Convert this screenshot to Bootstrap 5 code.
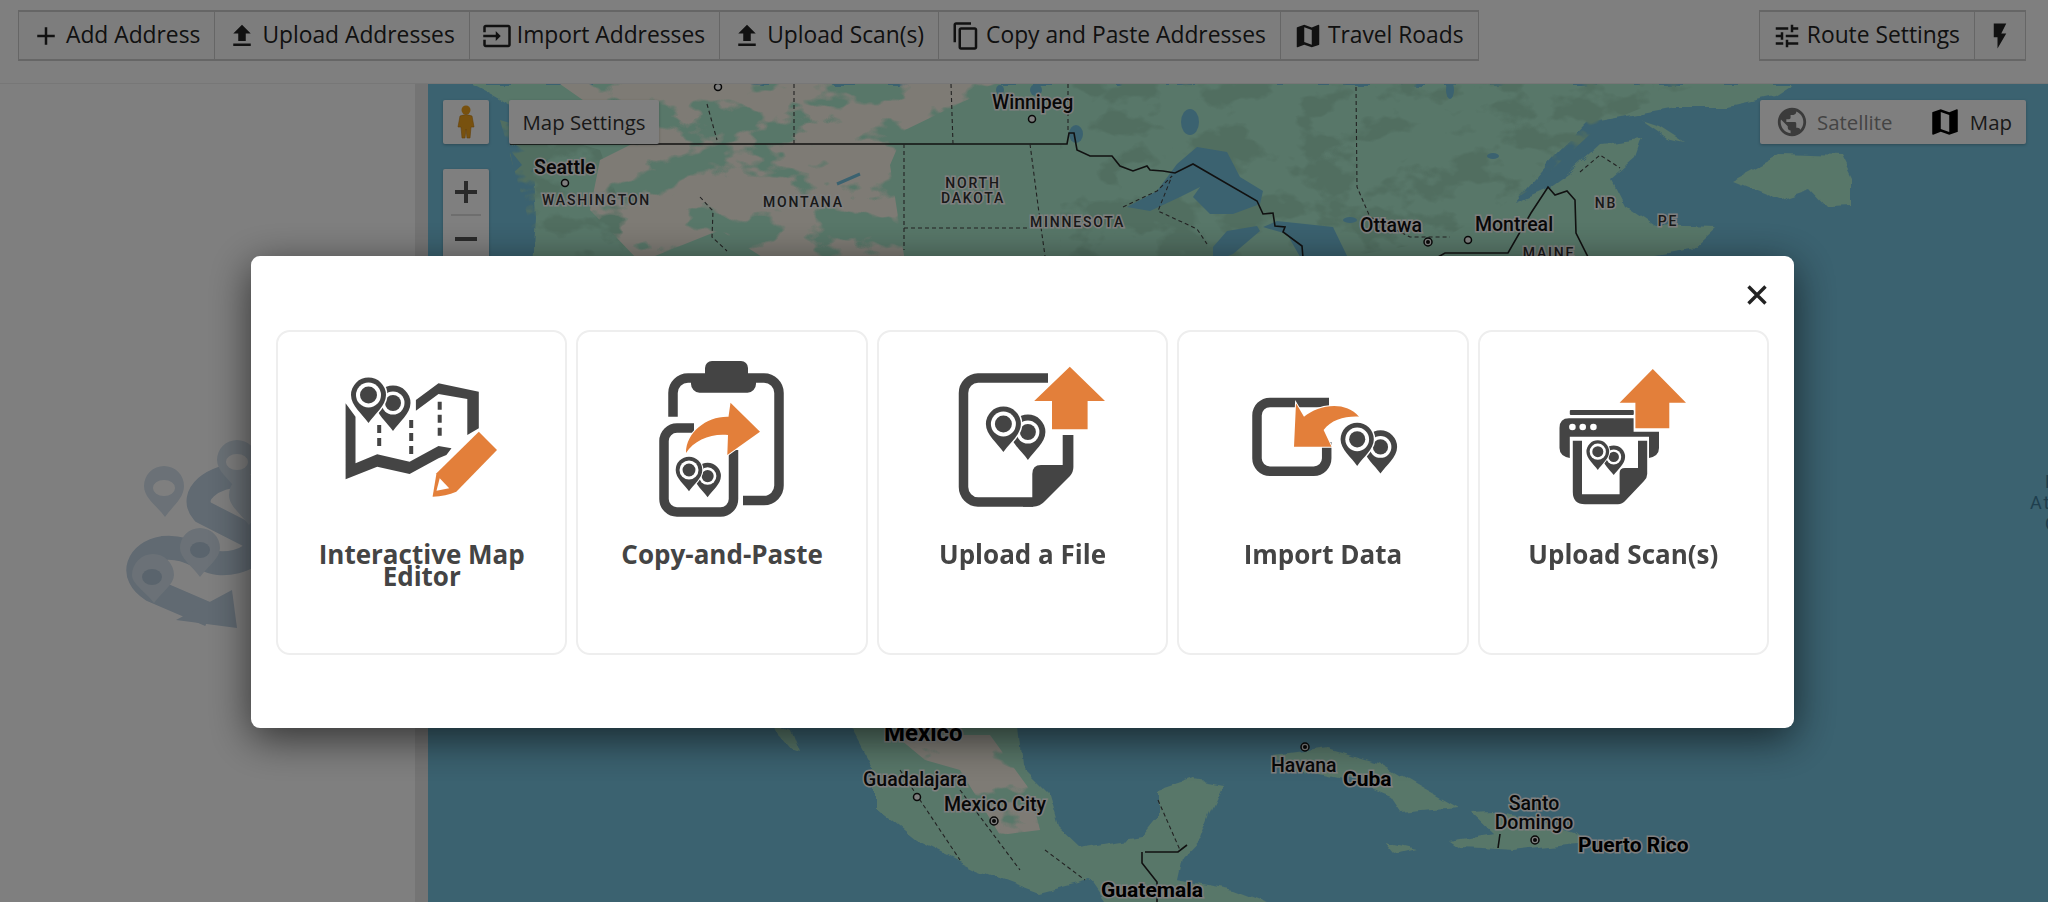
<!DOCTYPE html>
<html lang="en">
<head>
  <meta charset="UTF-8" />
  <meta name="viewport" content="width=device-width, initial-scale=1" />
  <title>Add Stops</title>
  <link href="https://cdn.jsdelivr.net/npm/bootstrap@5.3.0/dist/css/bootstrap.min.css" rel="stylesheet" />
  <style>
    html, body { height: 100%; overflow: hidden; }
    body { font-family: "Open Sans", sans-serif; background: #fff; }
    .top-bar { height: 84px; padding: 10px 22px 0 18px; border-bottom: 1px solid #eee; }
    .tool-group { height: 51px; border: 1px solid #ccc; border-bottom-width: 2px; border-top-width: 2px; background: #fbfbfb; }
    .tool-btn { display: flex; align-items: center; gap: 5px; height: 100%; padding: 0 14px 0 12px; border: 0; border-right: 1px solid #ccc; background: transparent; font-size: 22.8px; color: #222; white-space: nowrap; }
    .tool-btn:last-child { border-right: 0; }
    .tool-btn svg { width: 30px; height: 30px; fill: #222; flex: none; }
    .bolt-btn { padding: 0 10px; }
    .work-area { height: 818px; }
    .side-panel { width: 415px; padding-top: 74px; }
    .split-bar { width: 13px; background: #e9e9e9; }
    .map-pane { position: relative; flex: 1; overflow: hidden; background: #76c4e0; }
    .map-pane > svg { display: block; }
    .map-tile { position: absolute; top: 16px; height: 44px; background: #fff; border-radius: 2px; display: flex; align-items: center; color: #333; font-size: 20.4px; box-shadow: 0 1px 3px rgba(0,0,0,.25); }
    .peg-tile { left: 15px; width: 46px; justify-content: center; }
    .settings-tile { left: 81px; width: 150px; justify-content: center; }
    .zoom-tile { left: 15px; top: 85px; width: 46px; height: 110px; flex-direction: column; }
    .zoom-tile div { height: 45px; width: 100%; display: flex; align-items: center; justify-content: center; }
    .zoom-tile hr { width: 30px; margin: 0; opacity: 1; border-top: 2px solid #ddd; }
    .type-tile { right: 22px; width: 266px; padding: 0 14px 0 15px; justify-content: space-between; }
    .type-tile span { display: flex; align-items: center; gap: 8px; }
    .type-off { color: #888; }
    .map-city { font-family: Roboto, sans-serif; font-size: 19.5px; font-weight: 500; fill: #111; stroke: #fff; stroke-width: 3px; paint-order: stroke; }
    .map-big { font-family: Roboto, sans-serif; font-size: 21px; font-weight: 700; fill: #000; stroke: #fff; stroke-width: 3px; paint-order: stroke; }
    .map-state { font-family: Roboto, sans-serif; font-size: 14px; font-weight: 500; letter-spacing: 1.8px; fill: #333; stroke: #fff; stroke-width: 3px; paint-order: stroke; }
    .map-sea { font-family: Roboto, sans-serif; font-size: 18px; letter-spacing: 2px; fill: #3e7f9c; }
    .modal-dialog.picker-dialog { max-width: 1543px; margin: 256px 0 0 251px; }
    .picker-content { height: 472px; border: 0; border-radius: 9px; box-shadow: 0 10px 42px rgba(0,0,0,.62); }
    .close-x { position: absolute; top: 29px; right: 27px; width: 20px; height: 20px; padding: 0; border: 0; background: none; line-height: 0; }
    .picker-body { padding: 74px 25px 0; gap: 9px; }
    .picker-card { flex: 1 1 0; height: 325px; padding-top: 18px; border: 2px solid #eee; border-radius: 14px; align-items: center; text-align: center; }
    .picker-card svg { width: 200px; height: 170px; display: block; }
    .picker-title { width: 230px; margin-top: 23px; font-size: 26px; line-height: 22px; font-weight: 700; color: #444; }
    .dk { fill: #444; }
    .og { fill: #e37f3a; }
  </style>
</head>
<body>
  <div class="top-bar d-flex justify-content-between align-items-start">
    <div class="tool-group d-flex">
      <button class="tool-btn"><svg viewBox="0 0 24 24"><path d="M19 13h-6v6h-2v-6H5v-2h6V5h2v6h6v2z"/></svg>Add Address</button>
      <button class="tool-btn"><svg viewBox="0 0 24 24"><path d="M9 16h6v-6h4l-7-7-7 7h4zm-4 2h14v2H5z"/></svg>Upload Addresses</button>
      <button class="tool-btn"><svg viewBox="0 0 24 24"><path d="M21 3.01H3c-1.1 0-2 .9-2 2V9h2V4.99h18v14.03H3V15H1v4.01c0 1.1.9 1.98 2 1.98h18c1.1 0 2-.88 2-1.98v-14c0-1.11-.9-2-2-2zM11 16l4-4-4-4v3H1v2h10v3z"/></svg>Import Addresses</button>
      <button class="tool-btn"><svg viewBox="0 0 24 24"><path d="M9 16h6v-6h4l-7-7-7 7h4zm-4 2h14v2H5z"/></svg>Upload Scan(s)</button>
      <button class="tool-btn"><svg viewBox="0 0 24 24"><path d="M16 1H4c-1.1 0-2 .9-2 2v14h2V3h12V1zm3 4H8c-1.1 0-2 .9-2 2v14c0 1.1.9 2 2 2h11c1.1 0 2-.9 2-2V7c0-1.1-.9-2-2-2zm0 16H8V7h11v14z"/></svg>Copy and Paste Addresses</button>
      <button class="tool-btn"><svg viewBox="0 0 24 24"><path d="M20.5 3l-.16.03L15 5.1 9 3 3.36 4.9c-.21.07-.36.25-.36.48V20.5c0 .28.22.5.5.5l.16-.03L9 18.9l6 2.1 5.64-1.9c.21-.07.36-.25.36-.48V3.5c0-.28-.22-.5-.5-.5zM15 19l-6-2.11V5l6 2.11V19z"/></svg>Travel Roads</button>
    </div>
    <div class="tool-group d-flex">
      <button class="tool-btn"><svg viewBox="0 0 24 24"><path d="M3 17v2h6v-2H3zM3 5v2h10V5H3zm10 16v-2h8v-2h-8v-2h-2v6h2zM7 9v2H3v2h4v2h2V9H7zm14 4v-2H11v2h10zm-6-4h2V7h4V5h-4V3h-2v6z"/></svg>Route Settings</button>
      <button class="tool-btn bolt-btn"><svg viewBox="0 0 24 24"><path d="M7 2v11h3v9l7-12h-4l4-8z"/></svg></button>
    </div>
  </div>

  <div class="work-area d-flex">
    <div class="side-panel d-flex justify-content-center align-items-center">
      <!-- empty route placeholder -->
      <svg width="180" height="220" viewBox="0 0 180 220">
        <path d="M125 55C95 55 70 75 85 92L130 115C150 130 125 145 100 143C85 142 70 125 45 128C20 132 10 155 34 170L92 195" fill="none" stroke="#c2d4e4" stroke-width="24"/>
        <path d="M114 170L119 208L58 200Z" fill="#c2d4e4"/>
        <g fill="#d6e3ee">
          <path d="M47 97C39 86 26 78 26 66A20 20 0 0 1 66 66C66 78 55 86 47 97Z"/>
          <path d="M119 70C111 59 99 51 99 40A20 20 0 0 1 139 40C139 51 127 59 119 70Z"/>
          <path d="M131 105C123 94 111 86 111 75A20 20 0 0 1 151 75C151 86 139 94 131 105Z"/>
          <path d="M82 157C74 146 62 138 62 128A20 20 0 0 1 102 128C102 138 90 146 82 157Z"/>
          <path d="M36 183C28 172 14 164 14 155A21 21 0 0 1 56 155C56 164 44 172 36 183Z"/>
        </g>
        <ellipse cx="46" cy="68" rx="11" ry="8" fill="#fff"/>
        <ellipse cx="119" cy="42" rx="11" ry="8" fill="#fff"/>
        <ellipse cx="82" cy="130" rx="10" ry="8" fill="#b4c8da"/>
        <ellipse cx="34" cy="157" rx="10" ry="8" fill="#b4c8da"/>
      </svg>
    </div>
    <div class="split-bar"></div>
    <div class="map-pane">
      <svg width="1620" height="818" viewBox="428 84 1620 818">
        <defs>
          <filter id="rough" x="0" y="0" width="100%" height="100%">
            <feTurbulence type="fractalNoise" baseFrequency=".035" numOctaves="3" seed="4"/>
            <feDisplacementMap in="SourceGraphic" scale="12" xChannelSelector="R" yChannelSelector="G"/>
          </filter>
          <filter id="patch" filterUnits="userSpaceOnUse" x="428" y="84" width="1620" height="818" color-interpolation-filters="sRGB">
            <feTurbulence type="fractalNoise" baseFrequency=".016 .028" numOctaves="4" seed="7"/>
            <feColorMatrix type="matrix" values="0 0 0 0 0 0 0 0 0 0 0 0 0 0 0 14 0 0 0 -5.8" result="m"/>
            <feComposite in="SourceGraphic" in2="m" operator="in"/>
          </filter>
          <filter id="patch2" filterUnits="userSpaceOnUse" x="428" y="84" width="1620" height="818" color-interpolation-filters="sRGB">
            <feTurbulence type="fractalNoise" baseFrequency=".02 .03" numOctaves="4" seed="21"/>
            <feColorMatrix type="matrix" values="0 0 0 0 0 0 0 0 0 0 0 0 0 0 0 10 0 0 0 -5" result="m"/>
            <feComposite in="SourceGraphic" in2="m" operator="in"/>
          </filter>
        </defs>
        <!-- land -->
        <g filter="url(#rough)" fill="#b0eed2">
          <path d="M469 84L490 95L517 110L510 143L548 160L532 173L535 217L532 265H1601L1690 250L1715 227L1655 225L1625 205L1612 180L1635 160L1642 140L1600 145L1570 172L1545 190L1515 203L1555 157L1588 123L1675 107L1728 107L1775 97L1795 84Z"/>
          <path d="M1642 120L1660 126L1685 142L1668 138Z"/>
          <path d="M1732 180L1779 155L1842 157L1852 177L1852 207L1829 208L1812 190L1782 200Z"/>
          <path d="M776 720L792 728L801 752L795 750L782 735Z"/>
          <path d="M848 720L874 767L874 807L915 840L977 870L1039 893L1090 880L1111 910H1287L1235 890L1178 880L1183 857L1199 840L1209 813L1223 783L1194 778L1158 790L1158 817L1142 837L1080 847L1059 827L1049 793L1023 767L1018 720Z"/>
          <path d="M1276 755L1328 748L1379 763L1421 787L1457 807L1400 812L1390 797L1348 780L1287 767Z"/>
          <path d="M1472 813L1493 812L1524 817L1575 833L1586 842L1514 850L1462 847L1452 840L1493 833Z"/>
          <path d="M1385 840L1416 847L1395 852Z"/>
        </g>
        <!-- darker forest, then dry land -->
        <path filter="url(#patch2)" fill="#a2dcc0" d="M1060 84H1700L1600 125L1530 190L1440 240L1320 262H1060ZM500 120L600 150L640 260H540Z"/>
        <path filter="url(#patch)" fill="#fdf7ea" d="M560 84H1000L905 130L890 165L905 262H770L720 230L640 262L590 210L600 160L640 140Z"/>
        <path filter="url(#patch)" fill="#fdf7ea" d="M895 735H990L1030 790L1040 830L1000 835L960 770L925 760Z"/>
        <!-- lakes -->
        <g fill="#76c4e0">
          <path d="M1127 207L1157 191L1177 164L1197 147L1227 152L1240 177L1263 191L1260 204L1233 214L1210 214L1193 197L1200 187L1180 197L1150 211Z"/>
          <path d="M1213 247L1227 231L1257 226L1260 231L1233 254L1213 262Z"/>
          <path d="M1263 227L1277 221L1333 227L1350 262H1303L1287 234Z"/>
          <ellipse cx="1190" cy="122" rx="9" ry="13"/>
          <ellipse cx="1076" cy="134" rx="7" ry="9"/>
          <ellipse cx="1036" cy="90" rx="6" ry="6"/>
          <ellipse cx="1000" cy="90" rx="4" ry="5"/>
          <ellipse cx="1350" cy="220" rx="7" ry="3"/>
          <ellipse cx="1450" cy="90" rx="4" ry="9"/>
          <ellipse cx="1493" cy="156" rx="6" ry="3"/>
          <path d="M510 150L522 165L514 172Z"/>
        </g>
        <path d="M837 184L860 174" stroke="#76c4e0" stroke-width="3" fill="none"/>
        <!-- borders -->
        <g fill="none" stroke="#222" stroke-width="1.6">
          <path d="M510 144H1067L1069 133L1074 133L1077 150L1090 156L1112 156L1120 166L1133 171L1147 166L1150 170L1163 171L1175 173L1193 164L1257 201L1263 214L1273 213L1275 226L1285 227L1283 232L1302 246L1303 258"/>
          <path d="M1438 257L1445 253H1508L1531 213L1548 187L1555 195L1567 191L1575 200L1576 233L1588 257"/>
          <path d="M1145 852H1178L1187 845M1142 852V863L1157 882V902"/>
          <path d="M1500 834L1498 848"/>
        </g>
        <g fill="none" stroke="#444" stroke-width="1.1" stroke-dasharray="4 3">
          <path d="M794 84V144M951 84L953 144M1068 84V130M904 144V250M904 228H1030"/>
          <path d="M1030 144L1039 213L1045 256M707 104L717 140M700 197L713 211L712 237L727 251"/>
          <path d="M1356 87L1357 187L1370 217L1410 237L1450 237M1123 207L1157 191L1172 176L1158 211L1197 229L1207 244"/>
          <path d="M1580 172L1600 155L1620 168"/>
          <path d="M900 770L960 860M960 790L1020 870M1158 800L1180 850M1045 850L1085 880"/>
        </g>
        <!-- labels -->
        <g class="map-city">
          <text x="992" y="109">Winnipeg</text>
          <text x="534" y="174" font-weight="600">Seattle</text>
          <text x="1360" y="232">Ottawa</text>
          <text x="1475" y="231">Montreal</text>
          <text x="863" y="786">Guadalajara</text>
          <text x="944" y="811">Mexico City</text>
          <text x="1271" y="772">Havana</text>
          <text x="1534" y="810" text-anchor="middle">Santo</text>
          <text x="1534" y="829" text-anchor="middle">Domingo</text>
        </g>
        <g class="map-big">
          <text x="884" y="741" font-size="24">Mexico</text>
          <text x="1343" y="786">Cuba</text>
          <text x="1578" y="852">Puerto Rico</text>
          <text x="1101" y="897">Guatemala</text>
        </g>
        <g class="map-state">
          <text x="542" y="205">WASHINGTON</text>
          <text x="763" y="207">MONTANA</text>
          <text x="973" y="188" text-anchor="middle">NORTH</text>
          <text x="973" y="203" text-anchor="middle">DAKOTA</text>
          <text x="1030" y="227">MINNESOTA</text>
          <text x="1606" y="208" text-anchor="middle">NB</text>
          <text x="1668" y="226" text-anchor="middle">PE</text>
          <text x="1549" y="258" text-anchor="middle">MAINE</text>
        </g>
        <g class="map-sea">
          <text x="2045" y="488">North</text>
          <text x="2030" y="509">Atlantic</text>
          <text x="2045" y="530">Ocean</text>
        </g>
        <!-- city dots -->
        <g fill="#fff" stroke="#111" stroke-width="1.5">
          <circle cx="1032" cy="119" r="3.5"/>
          <circle cx="565" cy="183" r="3.5"/>
          <circle cx="1428" cy="242" r="4"/>
          <circle cx="1468" cy="240" r="3.5"/>
          <circle cx="917" cy="797" r="3.5"/>
          <circle cx="994" cy="821" r="4"/>
          <circle cx="1305" cy="747" r="4"/>
          <circle cx="1535" cy="840" r="4"/>
          <circle cx="718" cy="87" r="3.5"/>
        </g>
        <g fill="#111">
          <circle cx="1428" cy="242" r="2"/>
          <circle cx="994" cy="821" r="2"/>
          <circle cx="1305" cy="747" r="2"/>
          <circle cx="1535" cy="840" r="2"/>
        </g>
      </svg>
      <div class="map-tile peg-tile">
        <svg width="20" height="34" viewBox="0 0 20 34"><circle cx="10" cy="5" r="4.5" fill="#f0a31c"/><path d="M4 11Q10 8 16 11L18 22H15L14 33H11L10 24L9 33H6L5 22H2Z" fill="#f0a31c" stroke="#c77f12" stroke-width=".6"/></svg>
      </div>
      <div class="map-tile settings-tile">Map Settings</div>
      <div class="map-tile zoom-tile">
        <div><svg width="24" height="24" viewBox="0 0 24 24"><path d="M10 1h4v9h9v4h-9v9h-4v-9H1v-4h9z" fill="#555"/></svg></div>
        <hr>
        <div><svg width="24" height="24" viewBox="0 0 24 24"><path d="M1 10h22v4H1z" fill="#555"/></svg></div>
      </div>
      <div class="map-tile type-tile">
        <span class="type-off"><svg width="34" height="34" viewBox="0 0 24 24"><path fill="#777" d="M12 2C6.48 2 2 6.48 2 12s4.48 10 10 10 10-4.48 10-10S17.52 2 12 2zm-1 17.93c-3.95-.49-7-3.85-7-7.93 0-.62.08-1.21.21-1.79L9 15v1c0 1.1.9 2 2 2v1.93zm6.9-2.54c-.26-.81-1-1.39-1.9-1.39h-1v-3c0-.55-.45-1-1-1H8v-2h2c.55 0 1-.45 1-1V7h2c1.1 0 2-.9 2-2v-.41c2.93 1.19 5 4.06 5 7.41 0 2.08-.8 3.97-2.1 5.39z"/></svg>Satellite</span>
        <span><svg width="34" height="34" viewBox="0 0 24 24"><path fill="#000" d="M20.5 3l-.16.03L15 5.1 9 3 3.36 4.9c-.21.07-.36.25-.36.48V20.5c0 .28.22.5.5.5l.16-.03L9 18.9l6 2.1 5.64-1.9c.21-.07.36-.25.36-.48V3.5c0-.28-.22-.5-.5-.5zM15 19l-6-2.11V5l6 2.11V19z"/></svg>Map</span>
      </div>
    </div>
  </div>

  <div class="modal-backdrop fade show"></div>
  <div class="modal fade show d-block">
    <div class="modal-dialog picker-dialog">
      <div class="modal-content picker-content">
        <button type="button" class="close-x" aria-label="Close"><svg width="20" height="20" viewBox="0 0 20 20"><path d="M1.5 1.5L18.5 18.5M18.5 1.5L1.5 18.5" stroke="#222" stroke-width="3.4" fill="none"/></svg></button>
        <div class="picker-body d-flex">

          <div class="card picker-card">
            <svg viewBox="0 0 200 170">
              <defs>
                <path id="drop" d="M0 28C-6 19-17.5 11-17.5 0A17.5 17.5 0 0 1 17.5 0C17.5 11 6 19 0 28Z"/>
                <g id="pin-pair">
                  <use href="#drop" x="24.5" y="8" fill="#444"/>
                  <circle cx="24.5" cy="8" r="11.5" fill="#fff"/>
                  <circle cx="24.5" cy="8" r="8" fill="#444"/>
                  <use href="#drop" fill="#444" stroke="#fff" stroke-width="3" paint-order="stroke"/>
                  <circle r="12.5" fill="#fff"/>
                  <circle r="8.5" fill="#444"/>
                </g>
              </defs>
              <path class="dk" d="M23.6 53.3L33.5 66.7V113.3L55.2 104.3L87.6 111.7L116.5 96L129.5 98.3L124.4 105L116.5 108.3L87.6 124L55.2 116.7L23.6 129.3Z"/>
              <path class="dk" d="M93.9 50L116.5 33.3L156.8 41.7V78.3L145.3 85V49L116.5 44L93.9 60.7Z"/>
              <path d="M57.2 75V98M89.2 70V108M117.7 51.7V90" fill="none" stroke="#444" stroke-width="4" stroke-dasharray="8 5"/>
              <use href="#pin-pair" x="46.5" y="45"/>
              <path class="og" d="M156.8 81.7L175 100L134.3 141.7Q124 146 110.6 146.7L114.5 123.3Z"/>
              <path fill="#fff" d="M117.7 128.3L127.2 138.3L114.5 140.7Z"/>
            </svg>
            <div class="picker-title">Interactive Map Editor</div>
          </div>

          <div class="card picker-card">
            <svg viewBox="0 0 200 170">
              <path d="M51 66.7V43A15 15 0 0 1 66 28H142A15 15 0 0 1 157 43V135A15 15 0 0 1 142 150.5H121" fill="none" stroke="#444" stroke-width="9.5"/>
              <rect class="dk" x="83" y="11" width="43" height="22" rx="7"/>
              <path class="dk" d="M69 26H134V34A8.7 8.7 0 0 1 125.5 42.7H77.5A8.7 8.7 0 0 1 69 34Z"/>
              <path d="M72 78H55A13 13 0 0 0 42 91V149A13 13 0 0 0 55 162H98A13 13 0 0 0 111.5 149V100" fill="none" stroke="#444" stroke-width="9.5"/>
              <path class="og" stroke="#fff" stroke-width="2" paint-order="stroke" d="M64 103C64 82 85 66 106.5 66.7L108.5 52.7L138 81.7L105.3 105L106 85C90 83 72 90 64 103Z"/>
              <use href="#pin-pair" transform="translate(67 120) scale(.76)"/>
            </svg>
            <div class="picker-title">Copy-and-Paste</div>
          </div>

          <div class="card picker-card">
            <svg viewBox="0 0 200 170">
              <path d="M125 28H55A15 15 0 0 0 40.5 43V137A15 15 0 0 0 55 152H110" fill="none" stroke="#444" stroke-width="9.5"/>
              <path class="dk" d="M139.7 85H150.4V117Q150.4 122 147 126L122 151Q117 156.7 110 156.7H100V148H109.3V124Q109.3 115 118 115H139.7Z"/>
              <path class="og" stroke="#fff" stroke-width="2" paint-order="stroke" d="M146.8 16.7L182 51H164.6V79.3H129V51H111.2Z"/>
              <use href="#pin-pair" x="80.4" y="74"/>
            </svg>
            <div class="picker-title">Upload a File</div>
          </div>

          <div class="card picker-card">
            <svg viewBox="0 0 200 170">
              <path d="M106 52.4H47A13 13 0 0 0 34 65.4V108A13 13 0 0 0 47 121.3H90.7A13 13 0 0 0 103.7 108V92" fill="none" stroke="#444" stroke-width="9.5"/>
              <path class="og" stroke="#fff" stroke-width="2" paint-order="stroke" d="M71 96.7L73 53.3L81 66.7C95 55 122 50 136 66.7C122 66 108 70 100.6 80L108.5 96.7Z"/>
              <use href="#pin-pair" transform="translate(134.2 89.3) scale(.95)"/>
            </svg>
            <div class="picker-title">Import Data</div>
          </div>

          <div class="card picker-card">
            <svg viewBox="0 0 200 170">
              <rect class="dk" x="46.8" y="60" width="64" height="5" rx="1"/>
              <path class="dk" d="M46 68.3H110.6V81.7H136V98Q136 106 126 108V86.7H46.8V108Q36.5 106 36.5 98V78Q36.5 68.3 46 68.3Z"/>
              <g fill="#fff"><circle cx="49.4" cy="77" r="3.3"/><circle cx="59.7" cy="77" r="3.3"/><circle cx="70.4" cy="77" r="3.3"/></g>
              <path class="dk" d="M49.8 90.7H59V144.3H96.6V123Q96.6 118 102 118H115V90.7H124.2V124Q124.2 128 121 131L103 150Q99 154.3 95 154.3H62Q49.8 154.3 49.8 142Z"/>
              <use href="#pin-pair" transform="translate(74.8 101.7) scale(.65)"/>
              <path class="og" stroke="#fff" stroke-width="2" paint-order="stroke" d="M129.8 19L163 52.7H146.3V78.3H112.4V52.7H96.6Z"/>
            </svg>
            <div class="picker-title">Upload Scan(s)</div>
          </div>

        </div>
      </div>
    </div>
  </div>

  <script src="https://cdn.jsdelivr.net/npm/bootstrap@5.3.0/dist/js/bootstrap.bundle.min.js"></script>
</body>
</html>
